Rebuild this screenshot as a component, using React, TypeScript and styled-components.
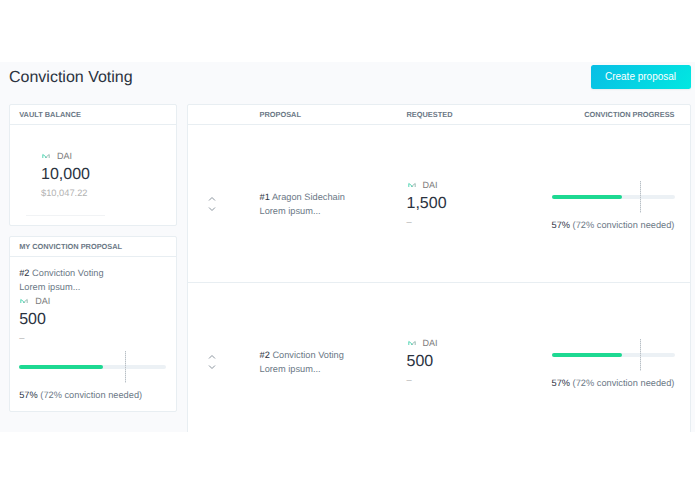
import React from 'react';
import styled, { createGlobalStyle } from 'styled-components';

const colors = {
  background: '#f9fafc',
  surface: '#ffffff',
  border: '#e8eef2',
  content: '#2b333f',
  contentSecondary: '#6b7886',
  hint: '#b3b3b3',
  positive: '#1dd992',
  track: '#ecf1f5',
};

const GlobalStyle = createGlobalStyle`
  *,
  *::before,
  *::after {
    box-sizing: border-box;
  }

  body {
    margin: 0;
    overflow: hidden;
    background-color: #ffffff;
    font-family: 'Liberation Sans', Arial, sans-serif;
    text-rendering: geometricPrecision;
  }
`;

const Page = styled.div`
  height: 494px;
  padding: 62px 0;
`;

const Main = styled.main`
  height: 370px;
  overflow: hidden;
  padding: 2.5px 4.5px 0 9px;
  background-color: ${colors.background};
`;

const Header = styled.header`
  display: flex;
  justify-content: space-between;
  align-items: flex-start;
  height: 25px;
`;

const Title = styled.h1`
  margin: 0;
  padding-top: 1px;
  font-size: 16px;
  font-weight: 400;
  line-height: 24px;
  color: ${colors.content};
`;

const Button = styled.button`
  width: 100px;
  height: 24.5px;
  padding: 0;
  border: 0;
  border-radius: 2.5px;
  background: linear-gradient(130deg, #08bee5 0%, #01e8e1 100%);
  box-shadow: 0 1px 2px rgba(0, 0, 0, 0.06);
  color: #ffffff;
  font-family: inherit;
  font-size: 10px;
  line-height: 24px;
`;

const Columns = styled.div`
  display: grid;
  grid-template-columns: 168px 1fr;
  column-gap: 10px;
  margin-top: 14.5px;
`;

const Side = styled.aside`
  display: flex;
  flex-direction: column;
  gap: 10px;
`;

const Card = styled.section<{ $height: number }>`
  height: ${({ $height }) => $height}px;
  border: 1px solid ${colors.border};
  border-radius: 2px;
  background-color: ${colors.surface};
`;

const Heading = styled.h2`
  height: 20px;
  margin: 0;
  padding-left: 9.2px;
  border-bottom: 1px solid ${colors.border};
  font-size: 7.4px;
  font-weight: 700;
  line-height: 19px;
  color: ${colors.contentSecondary};
`;

const Vault = styled.div`
  width: 79px;
  height: 91px;
  margin-left: 16px;
  padding: 23.5px 0 0 15px;
  border-bottom: 1px solid #f1f3f5;
`;

const Mine = styled.div`
  padding: 8.5px 10px 0 9.2px;
`;

const Balance = styled.div`
  display: flex;
  flex-direction: column;
`;

const Token = styled.div`
  display: flex;
  align-items: center;
  height: 14px;
  font-size: 9px;
  color: #7c7c7c;
`;

const TokenIcon = styled.svg`
  width: 10px;
  height: 8px;
  margin-right: 6px;
`;

const Amount = styled.div`
  font-size: 16px;
  line-height: 24px;
  color: ${colors.content};
`;

const Value = styled.div`
  font-size: 9.3px;
  line-height: 13px;
  color: ${colors.hint};
`;

const Text = styled.p`
  margin: 0;
  font-size: 9.25px;
  line-height: 14px;
  white-space: nowrap;
  color: ${colors.contentSecondary};
`;

const Strong = styled.span`
  color: ${colors.content};
`;

const Chart = styled.div`
  position: relative;
  display: flex;
  align-items: center;
  height: 32px;
  margin-bottom: 5px;
`;

const Track = styled.div`
  width: 100%;
  height: 4px;
  border-radius: 2px;
  background-color: ${colors.track};
`;

const Fill = styled.div`
  height: 100%;
  border-radius: 2px;
  background-color: ${colors.positive};
`;

const Threshold = styled.div`
  position: absolute;
  top: 0;
  bottom: 0;
  width: 1px;
  background: repeating-linear-gradient(#b9c0c6 0 1px, #dfe3e6 1px 2px);
`;

const Columned = styled.div`
  display: grid;
  grid-template-columns: 71.5px 147px 1fr 123px;
  padding-right: 15px;
`;

const TableHead = styled(Columned)`
  height: 20px;
  border-bottom: 1px solid ${colors.border};
  font-size: 7.4px;
  font-weight: 700;
  line-height: 19px;
  color: ${colors.contentSecondary};
`;

const HeadCell = styled.span<{ $end?: boolean }>`
  justify-self: ${({ $end }) => ($end ? 'end' : 'start')};
  white-space: nowrap;
`;

const Row = styled(Columned)`
  align-items: center;
  height: 158px;
  border-bottom: 1px solid ${colors.border};
`;

const Arrows = styled.svg`
  width: 8px;
  height: 16px;
  margin-left: 20px;
`;

const MineProgress = styled.div`
  margin-top: 6px;
`;

const ProgressCell = styled.div`
  padding-top: 5px;
`;

interface Proposal {
  id: number;
  name: string;
  description: string;
  requested: string;
  conviction: number;
  needed: number;
}

const proposals: Proposal[] = [
  {
    id: 1,
    name: 'Aragon Sidechain',
    description: 'Lorem ipsum...',
    requested: '1,500',
    conviction: 57,
    needed: 72,
  },
  {
    id: 2,
    name: 'Conviction Voting',
    description: 'Lorem ipsum...',
    requested: '500',
    conviction: 57,
    needed: 72,
  },
];

const TokenBalance: React.FC<{ amount: string; value?: string }> = ({
  amount,
  value = '–',
}) => (
  <Balance>
    <Token>
      <TokenIcon viewBox="0 0 10 8" fill="none" strokeWidth="0.9">
        <path d="M1.8 6V2.5L4.6 4.6V6" stroke="#45d3ae" />
        <path d="M5.6 6V4.6L8.2 2.5V6" stroke="#8fb5ab" />
      </TokenIcon>
      DAI
    </Token>
    <Amount>{amount}</Amount>
    <Value>{value}</Value>
  </Balance>
);

const ProposalInfo: React.FC<{ proposal: Proposal }> = ({ proposal }) => (
  <div>
    <Text>
      <Strong>#{proposal.id}</Strong> {proposal.name}
    </Text>
    <Text>{proposal.description}</Text>
  </div>
);

const ConvictionProgress: React.FC<{ proposal: Proposal }> = ({
  proposal: { conviction, needed },
}) => (
  <div>
    <Chart>
      <Track>
        <Fill style={{ width: `${conviction}%` }} />
      </Track>
      <Threshold style={{ left: `${needed}%` }} />
    </Chart>
    <Text>
      <Strong>{conviction}%</Strong> ({needed}% conviction needed)
    </Text>
  </div>
);

const App: React.FC = () => (
  <>
    <GlobalStyle />
    <Page>
      <Main>
        <Header>
          <Title>Conviction Voting</Title>
          <Button>Create proposal</Button>
        </Header>
        <Columns>
          <Side>
            <Card $height={122}>
              <Heading>VAULT BALANCE</Heading>
              <Vault>
                <TokenBalance amount="10,000" value="$10,047.22" />
              </Vault>
            </Card>
            <Card $height={176}>
              <Heading>MY CONVICTION PROPOSAL</Heading>
              <Mine>
                <ProposalInfo proposal={proposals[1]} />
                <TokenBalance amount={proposals[1].requested} />
                <MineProgress>
                  <ConvictionProgress proposal={proposals[1]} />
                </MineProgress>
              </Mine>
            </Card>
          </Side>
          <Card $height={338}>
            <TableHead>
              <span />
              <HeadCell>PROPOSAL</HeadCell>
              <HeadCell>REQUESTED</HeadCell>
              <HeadCell $end>CONVICTION PROGRESS</HeadCell>
            </TableHead>
            {proposals.map(proposal => (
              <Row key={proposal.id}>
                <Arrows viewBox="0 0 8 16" fill="none" stroke="#8b959e">
                  <path d="M1 4.5L4 1.5L7 4.5M1 11.5L4 14.5L7 11.5" />
                </Arrows>
                <ProposalInfo proposal={proposal} />
                <TokenBalance amount={proposal.requested} />
                <ProgressCell>
                  <ConvictionProgress proposal={proposal} />
                </ProgressCell>
              </Row>
            ))}
          </Card>
        </Columns>
      </Main>
    </Page>
  </>
);

export default App;
